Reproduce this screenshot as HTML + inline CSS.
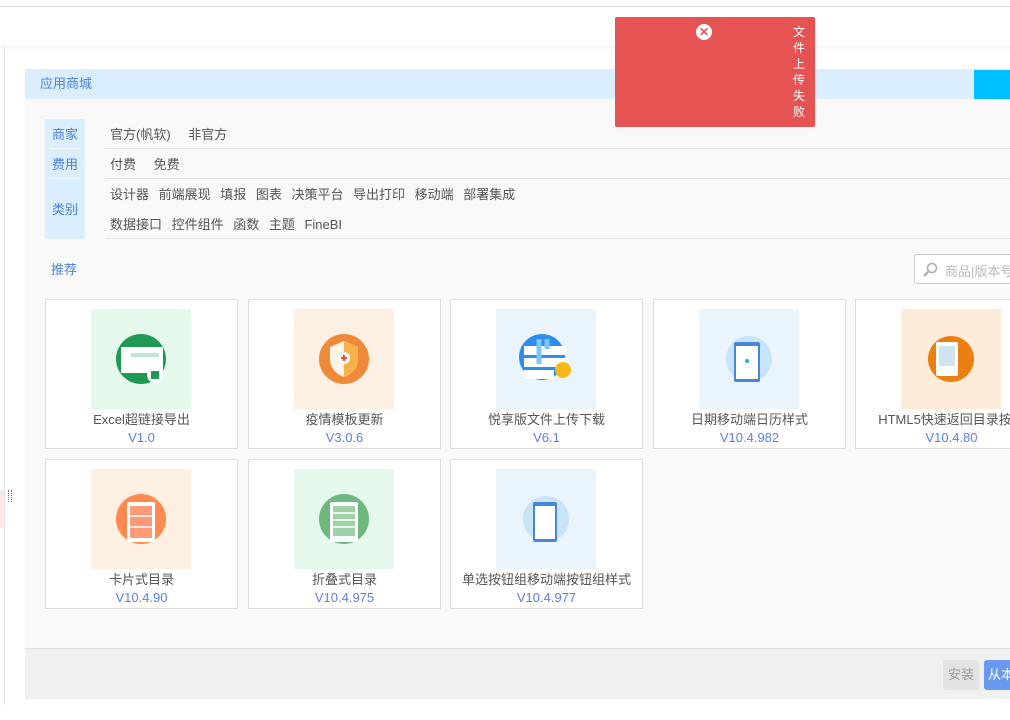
<!DOCTYPE html>
<html><head><meta charset="utf-8"><style>
*{margin:0;padding:0;box-sizing:border-box}
body{width:1010px;height:705px;overflow:hidden;background:#fff;font-family:"Liberation Sans","Noto Sans CJK SC",sans-serif;font-size:13px;color:#555;position:relative}
.a{position:absolute}
.card{position:absolute;width:193px;height:150px;background:#fff;border:1px solid #ddd;text-align:center}
.img{position:absolute;left:45px;top:9px;width:100px;height:100px}
.t{position:absolute;left:0;right:0;top:109px;font-size:13px;color:#555;white-space:nowrap}
.v{position:absolute;left:0;right:0;top:130px;font-size:13px;color:#5b7ff0}
.opt span{margin-right:10px}
</style></head><body>
<div class="a" style="left:0;top:6px;width:1010px;height:1px;background:#ddd"></div>
<div class="a" style="left:0;top:46px;width:1010px;height:4px;background:linear-gradient(#f2f2f2,#fff)"></div>
<div class="a" style="left:4px;top:47px;width:1px;height:658px;background:#e6e6e6"></div>
<div class="a" style="left:0;top:490px;width:4px;height:38px;background:#fbe8e6"></div>
<div class="a" style="left:8px;top:490px;width:4px;height:12px;border-left:1px dotted #a66;border-right:1px dotted #a66"></div>
<div class="a" style="left:25px;top:69px;width:985px;height:630px;background:#f9f9f9"></div>
<div class="a" style="left:25px;top:69px;width:985px;height:30px;background:#dbeefd;color:#4b7fe0;font-size:13px;line-height:30px;padding-left:15px">应用商城</div>
<div class="a" style="left:974px;top:70px;width:36px;height:29px;background:#00bfff"></div>
<div class="a" style="left:45px;top:119px;width:40px;height:120px;background:#dbeefd;color:#4b7fe0;text-align:center">
<div style="position:absolute;top:5px;width:40px">商家</div>
<div style="position:absolute;left:5px;top:29px;width:30px;height:1px;background:#fff"></div>
<div style="position:absolute;top:35px;width:40px">费用</div>
<div style="position:absolute;left:5px;top:59px;width:30px;height:1px;background:#fff"></div>
<div style="position:absolute;top:80px;width:40px">类别</div>
</div>
<div class="a opt" style="left:110px;top:124px;white-space:nowrap;word-spacing:4px"><span>官方(帆软)</span> <span>非官方</span></div>
<div class="a" style="left:105px;top:148px;width:905px;height:1px;background:#e6e6e6"></div>
<div class="a opt" style="left:110px;top:154px;word-spacing:4px"><span>付费</span> <span>免费</span></div>
<div class="a" style="left:105px;top:178px;width:905px;height:1px;background:#e6e6e6"></div>
<div class="a" style="left:110px;top:184px;white-space:nowrap;word-spacing:6px">设计器 前端展现 填报 图表 决策平台 导出打印 移动端 部署集成</div>
<div class="a" style="left:110px;top:214px;white-space:nowrap;word-spacing:6px">数据接口 控件组件 函数 主题 FineBI</div>
<div class="a" style="left:105px;top:238px;width:905px;height:1px;background:#e6e6e6"></div>
<div class="a" style="left:51px;top:259px;color:#4b7fe0">推荐</div>
<div class="a" style="left:914px;top:254px;width:110px;height:30px;border:1px solid #ccc;border-radius:3px;background:#fff;color:#bbb;padding:6px 0 0 30px">商品|版本号
<svg class="a" style="left:7px;top:7px" width="16" height="16" viewBox="0 0 16 16"><circle cx="10" cy="6" r="4.5" fill="none" stroke="#aaa" stroke-width="1.5"/><path d="M7 9L2 14" stroke="#aaa" stroke-width="2"/></svg></div>

<div class="card" style="left:45px;top:299px"><div class="img" style="background:#e4f8ec"><svg width="100" height="100"><circle cx="50" cy="50" r="25" fill="#1e9a55"/><rect x="30" y="38" width="42" height="26" fill="#fff"/><rect x="40" y="44" width="28" height="4" fill="#bfe8cf"/><rect x="56" y="58" width="16" height="16" rx="8" fill="#fff"/><rect x="60" y="62" width="8" height="8" fill="#1e9a55"/></svg></div><div class="t">Excel超链接导出</div><div class="v">V1.0</div></div>
<div class="card" style="left:248px;top:299px"><div class="img" style="background:#fdefe2"><svg width="100" height="100"><circle cx="50" cy="50" r="25" fill="#ef8a3a"/><path d="M36 38L50 32L64 38V50C64 60 56 66 50 68C44 66 36 60 36 50Z" fill="#fff4e6"/><path d="M50 32L64 38V50C64 60 56 66 50 68Z" fill="#f7b24a"/><circle cx="50" cy="49" r="6" fill="#fff"/><path d="M47 49h6M50 46v6" stroke="#e84a3a" stroke-width="2"/></svg></div><div class="t">疫情模板更新</div><div class="v">V3.0.6</div></div>
<div class="card" style="left:450px;top:299px"><div class="img" style="background:#eaf4fd"><svg width="100" height="100"><circle cx="46" cy="48" r="23" fill="#2d8ef0"/><rect x="28" y="37" width="42" height="9" fill="#fff"/><rect x="28" y="49" width="42" height="9" fill="#fff"/><rect x="28" y="61" width="30" height="9" fill="#fff"/><circle cx="67" cy="61" r="8" fill="#f9b81a"/><path d="M43 30v25M51 40v-10" stroke="#7cc7f8" stroke-width="5"/></svg></div><div class="t">悦享版文件上传下载</div><div class="v">V6.1</div></div>
<div class="card" style="left:653px;top:299px"><div class="img" style="background:#eaf4fd"><svg width="100" height="100"><circle cx="50" cy="50" r="23" fill="#c7e4f8"/><rect x="35" y="33" width="26" height="40" rx="2" fill="#4a86d8"/><rect x="37" y="37" width="22" height="33" fill="#fff"/><circle cx="48" cy="52" r="2" fill="#2aa9f0"/></svg></div><div class="t">日期移动端日历样式</div><div class="v">V10.4.982</div></div>
<div class="card" style="left:855px;top:299px"><div class="img" style="background:#fdecda"><svg width="100" height="100"><circle cx="50" cy="50" r="23" fill="#ec7f12"/><rect x="35" y="33" width="22" height="34" rx="2" fill="#fff"/><rect x="38" y="37" width="16" height="20" fill="#cfe3f0"/></svg></div><div class="t">HTML5快速返回目录按钮</div><div class="v">V10.4.80</div></div>
<div class="card" style="left:45px;top:459px"><div class="img" style="background:#fdefe2"><svg width="100" height="100"><circle cx="50" cy="50" r="25" fill="#ff8a50"/><rect x="36" y="33" width="28" height="40" rx="2" fill="#fff"/><rect x="39" y="37" width="22" height="32" fill="#ff9a78"/><path d="M39 47h22M39 58h22" stroke="#fff" stroke-width="1.5"/></svg></div><div class="t">卡片式目录</div><div class="v">V10.4.90</div></div>
<div class="card" style="left:248px;top:459px"><div class="img" style="background:#e4f8ec"><svg width="100" height="100"><circle cx="50" cy="50" r="25" fill="#6fb77f"/><rect x="36" y="33" width="28" height="40" rx="2" fill="#fff"/><rect x="39" y="37" width="22" height="30" fill="#9fd0a8"/><path d="M39 44h22M39 51h22M39 58h22" stroke="#fff" stroke-width="1.5"/></svg></div><div class="t">折叠式目录</div><div class="v">V10.4.975</div></div>
<div class="card" style="left:450px;top:459px"><div class="img" style="background:#eaf4fd"><svg width="100" height="100"><circle cx="50" cy="50" r="23" fill="#c7e4f8"/><rect x="37" y="33" width="24" height="40" rx="2" fill="#4a86d8"/><rect x="39" y="37" width="20" height="33" fill="#fff"/></svg></div><div class="t">单选按钮组移动端按钮组样式</div><div class="v">V10.4.977</div></div>

<div class="a" style="left:25px;top:648px;width:985px;height:51px;background:#f0f0f0;border-top:1px solid #ddd"></div>
<div class="a" style="left:943px;top:660px;width:36px;height:30px;background:#e3e3e3;border-radius:3px;color:#999;text-align:center;line-height:30px">安装</div>
<div class="a" style="left:984px;top:660px;width:40px;height:30px;background:#6a9af0;border-radius:3px;color:#fff;line-height:30px;padding-left:4px">从本地</div>

<div class="a" style="left:615px;top:17px;width:200px;height:110px;background:#e55353;border-radius:2px"></div>
<div class="a" style="left:696px;top:24px;width:16px;height:16px;border-radius:50%;background:#fff;color:#e55353;font-size:12px;font-weight:bold;text-align:center;line-height:16px">✕</div>
<div class="a" style="left:793px;top:24px;width:13px;color:#fff;font-size:12px;line-height:16px;word-break:break-all">文件上传失败</div>
</body></html>
